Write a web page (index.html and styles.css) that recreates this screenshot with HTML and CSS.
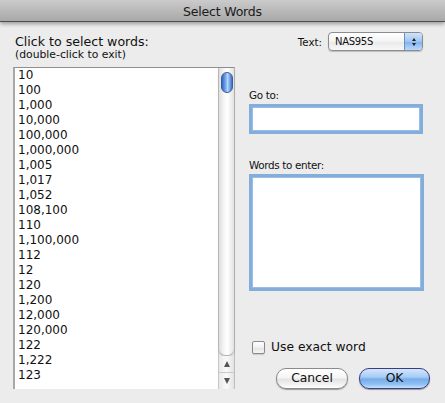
FILE: index.html
```html
<!DOCTYPE html>
<html>
<head>
<meta charset="utf-8">
<link rel="stylesheet" href="styles.css">
</head>
<body>
<div class="titlebar">Select Words</div>
<div class="content">
  <div class="left">
    <div class="prompt">Click to select words:</div>
    <div class="hint">(double-click to exit)</div>
    <div class="list">
      <div class="items">
        <div>10</div><div>100</div><div>1,000</div><div>10,000</div><div>100,000</div>
        <div>1,000,000</div><div>1,005</div><div>1,017</div><div>1,052</div><div>108,100</div>
        <div>110</div><div>1,100,000</div><div>112</div><div>12</div><div>120</div>
        <div>1,200</div><div>12,000</div><div>120,000</div><div>122</div><div>1,222</div><div>123</div>
      </div>
      <div class="scrollbar">
        <div class="track"><div class="thumb"></div></div>
        <div class="arrow up"><span class="tri-up"></span></div>
        <div class="arrow down"><span class="tri-down"></span></div>
      </div>
    </div>
  </div>
  <div class="right">
    <div class="popup-row">
      <span class="small-label">Text:</span>
      <div class="popup">
        <span class="popup-value">NAS95S</span>
        <span class="popup-arrows"><span class="pa-up"></span><span class="pa-down"></span></span>
      </div>
    </div>
    <div class="field-label goto-label">Go to:</div>
    <div class="field goto"></div>
    <div class="field-label words-label">Words to enter:</div>
    <div class="field words"></div>
    <div class="check-row">
      <span class="checkbox"></span>
      <span class="check-label">Use exact word</span>
    </div>
    <div class="buttons">
      <div class="btn cancel">Cancel</div>
      <div class="btn ok">OK</div>
    </div>
  </div>
</div>
</body>
</html>
```
FILE: styles.css
```css
html, body {
  margin: 0;
  padding: 0;
}
body {
  width: 445px;
  height: 403px;
  overflow: hidden;
  background: #ececec;
  font-family: "DejaVu Sans", "Liberation Sans", sans-serif;
  color: #111;
}
.titlebar {
  height: 21px;
  border-bottom: 1px solid #4e4e4e;
  background: linear-gradient(#cbcbcb, #b6b6b6 60%, #a8a8a8);
  box-shadow: 0 2px 4px rgba(0,0,0,0.35);
  text-align: center;
  font-size: 12.5px;
  line-height: 23px;
  letter-spacing: -0.2px;
  color: #1a1a1a;
  position: relative;
  z-index: 1;
}
.content {
  display: flex;
  padding: 13px 0 0 13px;
}
.left {
  width: 222px;
  display: flex;
  flex-direction: column;
}
.prompt {
  font-size: 12.6px;
  line-height: 14px;
  padding-left: 2px;
}
.hint {
  font-size: 10.8px;
  line-height: 11px;
  padding-left: 2px;
}
.list {
  margin-top: 7px;
  height: 321px;
  display: flex;
  background: #fff;
  border-top: 1px solid #8f8f8f;
  border-left: 2px solid #a8a8a8;
  border-right: 1px solid #bdbdbd;
}
.items {
  flex: 1;
  padding-left: 3px;
  font-size: 12px;
  line-height: 15px;
  overflow: hidden;
}
.scrollbar {
  width: 15px;
  border-left: 1px solid #c6c6c6;
  display: flex;
  flex-direction: column;
  background: #e4e4e4;
}
.track {
  flex: 1;
  background: linear-gradient(90deg, #dedede, #f7f7f7 35%, #ffffff 55%, #e2e2e2);
  border-radius: 0 0 7px 7px;
  box-shadow: 0 1px 2px rgba(0,0,0,0.3);
  padding: 4px 1px 0 2px;
}
.thumb {
  width: 10px;
  height: 19px;
  border: 1px solid #3c5c96;
  border-radius: 6px;
  background: linear-gradient(90deg, #2f67c7, #7fb0ef 40%, #b6d6fa 55%, #5f95e0 85%, #3b70c8);
}
.arrow {
  height: 16px;
  display: flex;
  align-items: center;
  justify-content: center;
  background: linear-gradient(90deg, #e9e9e9, #f9f9f9 50%, #e3e3e3);
}
.arrow.up {
  margin-top: 1px;
  border-bottom: 1px solid #c9c9c9;
}
.tri-up {
  width: 0; height: 0;
  border-left: 3.5px solid transparent;
  border-right: 3.5px solid transparent;
  border-bottom: 6px solid #555;
}
.tri-down {
  width: 0; height: 0;
  border-left: 3.5px solid transparent;
  border-right: 3.5px solid transparent;
  border-top: 6px solid #555;
}
.right {
  width: 175px;
  margin-left: 14px;
  display: flex;
  flex-direction: column;
  margin-top: -3px;
}
.popup-row {
  display: flex;
  justify-content: flex-end;
  align-items: center;
  margin-right: 1px;
  height: 19px;
}
.small-label {
  font-size: 10.3px;
  margin-right: 6px;
}
.popup {
  width: 93px;
  height: 17px;
  border: 1px solid #8c8c8c;
  border-radius: 4px;
  display: flex;
  background: linear-gradient(#ffffff, #f3f3f3 50%, #e9e9e9 51%, #f7f7f7);
  box-shadow: 0 1px 1px rgba(0,0,0,0.2);
  overflow: hidden;
}
.popup-value {
  flex: 1;
  font-size: 10px;
  letter-spacing: -0.3px;
  line-height: 17px;
  padding-left: 6px;
}
.popup-arrows {
  width: 17px;
  border-left: 1px solid #6f8fc4;
  background: linear-gradient(#cfe3fa, #9fc5f2 50%, #7fb0ee 51%, #b9d9fb);
  display: flex;
  flex-direction: column;
  align-items: center;
  justify-content: center;
  gap: 2px;
}
.pa-up {
  width: 0; height: 0;
  border-left: 2.5px solid transparent;
  border-right: 2.5px solid transparent;
  border-bottom: 3.5px solid #222;
}
.pa-down {
  width: 0; height: 0;
  border-left: 2.5px solid transparent;
  border-right: 2.5px solid transparent;
  border-top: 3.5px solid #222;
}
.field-label {
  font-size: 10.4px;
  line-height: 12px;
  letter-spacing: -0.35px;
}
.goto-label {
  margin-top: 38px;
}
.words-label {
  margin-top: 25px;
}
.field {
  margin-top: 3px;
  background: #fff;
  border: 3px solid #83aedb;
  box-shadow: inset 0 0 0 1px #9bbde3;
}
.goto {
  height: 24px;
  width: 168px;
}
.words {
  height: 111px;
}
.check-row {
  margin-top: 49px;
  display: flex;
  align-items: center;
  height: 15px;
}
.checkbox {
  width: 11px;
  height: 11px;
  margin-left: 3px;
  border: 1px solid #8a8a8a;
  border-radius: 2px;
  background: linear-gradient(#ffffff, #f0f0f0 50%, #e2e2e2 51%, #f6f6f6);
  box-shadow: 0 1px 1px rgba(0,0,0,0.15);
}
.check-label {
  font-size: 12.3px;
  margin-left: 6px;
  line-height: 15px;
}
.buttons {
  margin-top: 13px;
  margin-right: -6px;
  display: flex;
  justify-content: flex-end;
  gap: 11px;
}
.btn {
  height: 19px;
  border-radius: 10px;
  font-size: 12.3px;
  line-height: 19px;
  text-align: center;
  box-shadow: 0 1px 1px rgba(0,0,0,0.35);
}
.cancel {
  width: 70px;
  border: 1px solid #8a8a8a;
  background: linear-gradient(#ffffff, #f5f5f5 45%, #e4e4e4 55%, #f4f4f4 85%, #ffffff);
}
.ok {
  width: 69px;
  border: 1px solid #3a3c88;
  background: linear-gradient(#d4e6fb, #a9cdf4 40%, #78adea 55%, #8ec0f2 80%, #c7e3fd);
}
```
